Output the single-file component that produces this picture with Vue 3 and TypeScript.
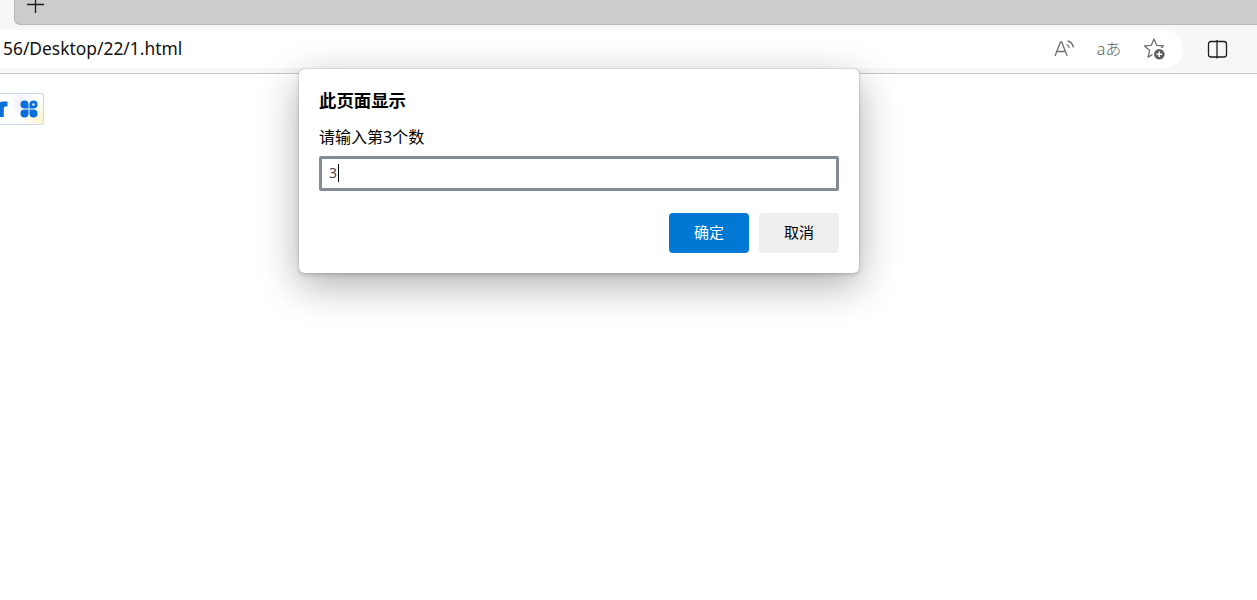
<script setup lang="ts">
const title = '此页面显示'
const message = '请输入第3个数'
const value = '3'
</script>

<template>
  <div class="page">
    <header class="chrome">
      <div class="tabstrip">
        <div class="tabs">
          <svg class="plus" width="20" height="20" viewBox="0 0 20 20"><path d="M9.500 0V13M1 4.500H18" stroke="#1a1a1a" stroke-width="1.300" fill="none" /></svg>
        </div>
      </div>
      <div class="toolbar">
        <div class="address">
          <span class="url">56/Desktop/22/1.html</span>
          <div class="actions">
            <svg width="24" height="24" viewBox="0 0 24 24" fill="none" stroke="#6f6f6f" stroke-width="1.300"><path d="M2 19 7.500 5H8.700L14.200 19M3.800 14.500H12.400" /><path d="M13.500 7.500Q15.800 8.200 16.300 11M14.500 4Q19.500 5 20.300 10.500" /></svg>
            <span class="translate">aあ</span>
            <svg width="26" height="26" viewBox="0 0 26 26" fill="none"><path d="M13 3 15.700 9.300 22.500 9.900 17.400 14.400 18.900 21.100 13 17.600 7.100 21.100 8.600 14.400 3.500 9.900 10.300 9.300Z" stroke="#6f6f6f" stroke-width="1.300" stroke-linejoin="round" /><circle cx="18.300" cy="18.300" r="6.800" fill="#fff" /><circle cx="18.300" cy="18.300" r="5.300" fill="#5f5f5f" /><path d="M18.300 15.500V21.100M15.500 18.300H21.100" stroke="#fff" stroke-width="1.400" /></svg>
          </div>
        </div>
        <div class="split">
          <svg width="22" height="22" viewBox="0 0 22 22" fill="none" stroke="#1f1f1f" stroke-width="1.300"><path d="M11 3.500H5Q2.500 3.500 2.500 6V16.500Q2.500 19 5 19H11M11 3.500H18Q20.500 3.500 20.500 6V16.500Q20.500 19 18 19H11" /><path d="M11 2V20.500" /></svg>
        </div>
      </div>
    </header>

    <main class="content">
      <div class="widget">
        <div class="glow"></div>
        <svg class="arrow" width="10" height="18" viewBox="0 0 10 18"><path d="M-3 17V9Q-3 2 4 1.500H8.500V6.500H6.500Q4.800 6.500 4.800 8.500V17Z" fill="#0a6fd8" /></svg>
        <svg class="clover" width="18" height="18" viewBox="0 0 20 20" fill="#0a6fd8">
          <path d="M.500 5Q.500 .500 5 .500Q9.500 .500 9.500 5V9.500H5Q.500 9.500 .500 5Z" />
          <path d="M19.500 5Q19.500 .500 15 .500Q10.500 .500 10.500 5V9.500H15Q19.500 9.500 19.500 5Z" />
          <path d="M.500 15Q.500 19.500 5 19.500Q9.500 19.500 9.500 15V10.500H5Q.500 10.500 .500 15Z" />
          <path d="M19.500 15Q19.500 19.500 15 19.500Q10.500 19.500 10.500 15V10.500H15Q19.500 10.500 19.500 15Z" />
          <circle cx="15" cy="5" r="1.500" fill="#dfeaff" />
        </svg>
      </div>
    </main>

    <section class="dialog">
      <h1 class="title">{{ title }}</h1>
      <p class="message">{{ message }}</p>
      <div class="input"><span class="value">{{ value }}</span><i class="caret"></i></div>
      <div class="buttons">
        <button class="btn primary">确定</button>
        <button class="btn">取消</button>
      </div>
    </section>
  </div>
</template>

<style>
html, body { margin: 0; background: #fff; overflow: hidden; }
</style>

<style scoped>
.page {
  position: relative;
  height: 600px;
  width: 1257px;
  overflow: hidden;
  background: #fff;
  font-family: "Noto Sans", "Noto Sans CJK SC", sans-serif;
  color: #000;
}
.chrome {
  height: 74px;
  box-sizing: border-box;
  background: #f7f7f7;
  border-bottom: 1px solid #c9c9c9;
}
.tabstrip {
  height: 30px;
  box-sizing: border-box;
  padding-left: 14px;
  padding-bottom: 5px;
}
.tabs {
  height: 25px;
  box-sizing: border-box;
  background: #cccccc;
  border-left: 1px solid #b5b5b5;
  border-bottom: 1px solid #b8b8b8;
  border-bottom-left-radius: 6px;
  padding-left: 11px;
}
.plus { display: block; }
.toolbar {
  display: flex;
  align-items: flex-start;
  height: 38px;
}
.address {
  width: 1183px;
  height: 38px;
  background: #fff;
  border-radius: 0 19px 19px 0;
  display: flex;
  align-items: center;
  box-sizing: border-box;
  padding-left: 3px;
}
.url {
  font-size: 17.400px;
  line-height: 24px;
  padding-bottom: 2px;
  color: #111;
  white-space: nowrap;
}
.actions {
  margin-left: auto;
  margin-right: 16px;
  display: flex;
  align-items: center;
  gap: 19px;
}
.actions svg { display: block; }
.translate {
  width: 26px;
  text-align: center;
  font-size: 16px;
  font-weight: 300;
  line-height: 24px;
  color: #666;
  white-space: nowrap;
}
.split {
  margin-left: 23px;
  height: 38px;
  display: flex;
  align-items: center;
}
.content {
  display: flex;
  padding-top: 19px;
}
.widget {
  position: relative;
  margin-left: -10px;
  width: 54px;
  height: 32px;
  box-sizing: border-box;
  border: 1px solid #c9d9ea;
  border-radius: 2px;
  display: flex;
  align-items: center;
  padding-left: 8px;
  gap: 11px;
  overflow: hidden;
  background: #fff;
}
.glow {
  position: absolute;
  right: 0;
  top: 0;
  width: 30px;
  height: 30px;
  background: radial-gradient(circle at 30% 25%, #f0edff 0%, transparent 50%), radial-gradient(circle at 90% 85%, #fff3cf 0%, transparent 50%);
}
.arrow, .clover { position: relative; display: block; flex: none; }
.dialog {
  position: absolute;
  left: 299px;
  top: 69px;
  width: 560px;
  height: 204px;
  box-sizing: border-box;
  padding: 19px 20px 20px;
  background: #fff;
  border-radius: 5px;
  box-shadow: 0 0 1px rgba(0,0,0,.45), 0 2px 4px rgba(0,0,0,.15), 0 12px 40px rgba(0,0,0,.32);
}
.title {
  margin: 0;
  font-size: 17.400px;
  line-height: 24px;
  font-weight: 700;
  color: #000;
}
.message {
  margin: 15px 0 0;
  font-size: 16px;
  line-height: 20px;
}
.input {
  margin-top: 9px;
  height: 35px;
  box-sizing: border-box;
  border: 3px solid #858b93;
  border-radius: 2px;
  display: flex;
  align-items: center;
  padding-left: 7px;
  padding-bottom: 2px;
  font-size: 14px;
}
.value { color: #444; line-height: 18px; }
.caret {
  display: block;
  width: 1px;
  height: 18px;
  background: #000;
  margin-left: 1px;
}
.buttons {
  margin-top: 22px;
  display: flex;
  justify-content: flex-end;
  gap: 10px;
}
.btn {
  width: 80px;
  height: 40px;
  border: 0;
  border-radius: 4px;
  background: #efefef;
  color: #000;
  font-family: inherit;
  font-size: 15px;
  padding: 0 0 4px;
}
.primary {
  background: #0078d4;
  color: #fff;
}
</style>
